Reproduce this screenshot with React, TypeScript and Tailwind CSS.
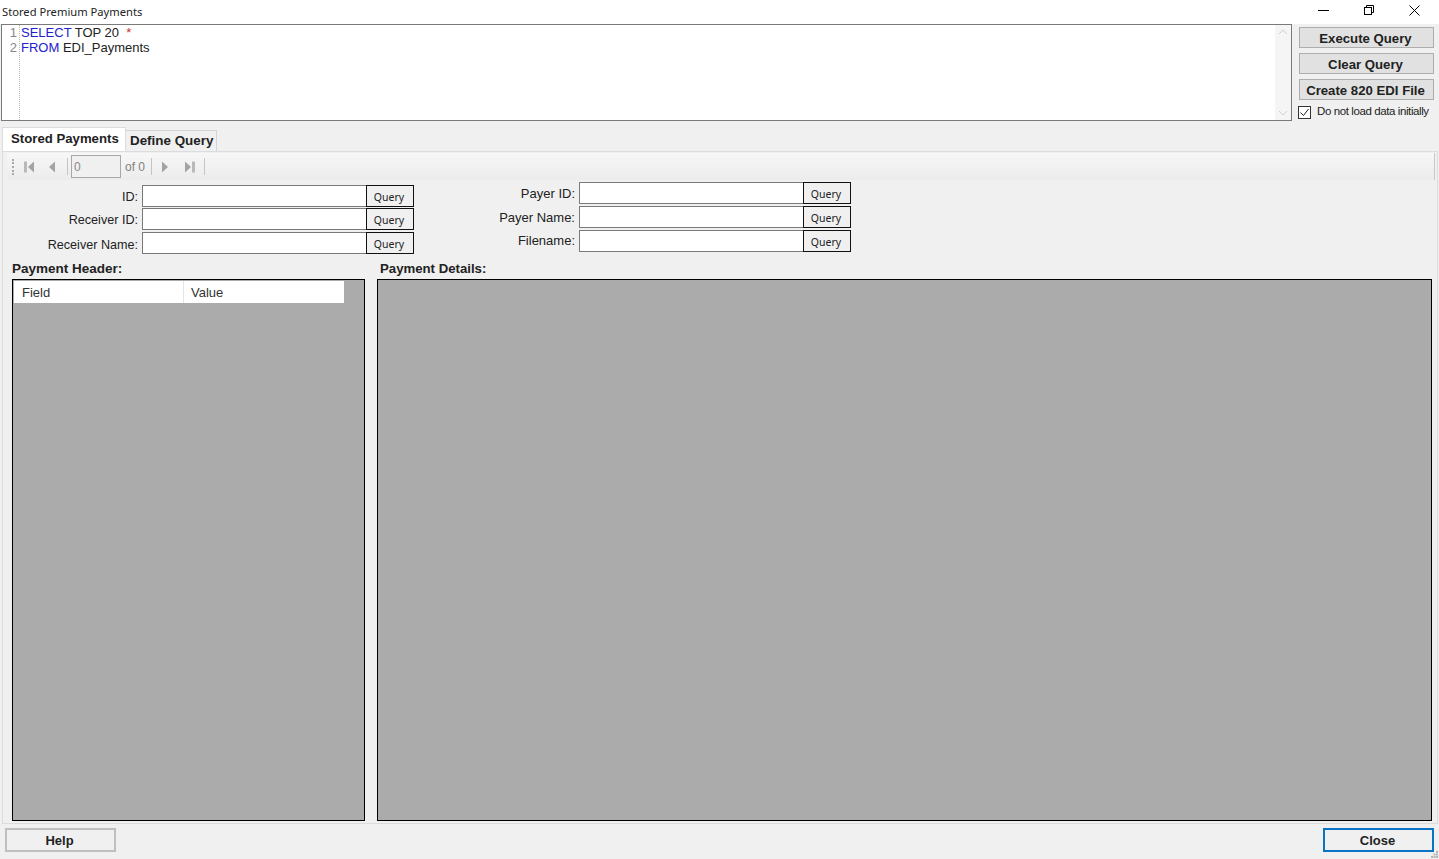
const ui = "font-['Liberation_Sans',Arial,sans-serif]";

function QueryField({ label, labelWidth, labelSize }: { label: string; labelWidth: string; labelSize: string }) {
  return (
    <div className="flex items-center h-[22px]">
      <span className={`${labelWidth} ${labelSize} shrink-0 text-right pr-[4px] text-[#222] leading-none whitespace-nowrap`}>{label}</span>
      <div className="w-[224px] h-[22px] bg-white border border-[#7a7a7a] border-r-0" />
      <button className="w-[48px] h-[22px] border border-[#111] bg-[#f0f0f0] text-[10.5px] text-[#222] font-['Noto_Sans',sans-serif] leading-none pt-[2px] pr-[2px]">
        Query
      </button>
    </div>
  );
}

function NavArrow({ dir, bar }: { dir: "left" | "right"; bar?: boolean }) {
  return (
    <svg width="14" height="14" viewBox="0 0 14 14" className="shrink-0">
      {dir === "left" ? (
        <>
          {bar && <rect x="1" y="1.5" width="3" height="11" fill="#b9b9b9" />}
          <path d="M11 1.5 L5 7 L11 12.5 Z" fill="#a3a3a3" />
        </>
      ) : (
        <>
          <path d="M3 1.5 L9 7 L3 12.5 Z" fill="#a3a3a3" />
          {bar && <rect x="10" y="1.5" width="3" height="11" fill="#b9b9b9" />}
        </>
      )}
    </svg>
  );
}

function Sep() {
  return <div className="w-px h-[17px] bg-[#c4c4c4] shrink-0" />;
}

function SideButton({ children }: { children: string }) {
  return (
    <button className="w-[135px] h-[21px] bg-[#e1e1e1] border border-[#adadad] text-[13.2px] font-bold text-[#222] leading-none whitespace-nowrap pt-[2px] pr-[2px]">
      {children}
    </button>
  );
}

export default function App() {
  return (
    <div className={`${ui} relative w-[1439px] h-[859px] bg-[#f0f0f0] flex flex-col overflow-hidden text-[#222]`}>
      {/* title bar */}
      <div className="h-[24px] shrink-0 bg-white flex items-center justify-between">
        <span className="pl-[2px] text-[11.2px] text-[#222] font-['Noto_Sans',sans-serif] leading-none">Stored Premium Payments</span>
        <div className="flex items-center pr-[19px] pb-[4px]">
          <svg width="11" height="11" viewBox="0 0 11 11" stroke="black" strokeWidth="1">
            <path d="M0 5.5 H11" />
          </svg>
          <svg width="12" height="12" viewBox="0 0 12 12" fill="none" stroke="black" strokeWidth="1" className="ml-[34px]">
            <rect x="1.5" y="3.5" width="7" height="7" />
            <path d="M3.5 3.5 V1.5 H10.5 V8.5 H8.5" />
          </svg>
          <svg width="11" height="11" viewBox="0 0 11 11" fill="none" stroke="black" strokeWidth="1" className="ml-[34px]">
            <path d="M0.5 0.5 L10.5 10.5 M10.5 0.5 L0.5 10.5" />
          </svg>
        </div>
      </div>

      {/* query editor + buttons */}
      <div className="h-[104px] shrink-0 flex items-start pl-[1px]">
        <div className="w-[1291px] h-[97px] bg-white border border-[#7a7a7a] flex">
          <div className="w-[18px] shrink-0 border-r border-dotted border-[#bbb] text-right pr-[2px] text-[13px] leading-[15px] text-[#888]">
            <div>1</div>
            <div>2</div>
          </div>
          <div className="flex-1 pl-[1px] text-[13px] leading-[15px] text-[#222] whitespace-pre">
            <div>
              <span className="text-[#2222cc]">SELECT</span> TOP 20 <span className="text-[#cc3333]"> *</span>
            </div>
            <div>
              <span className="text-[#2222cc]">FROM</span> EDI_Payments
            </div>
          </div>
          <div className="w-[16px] shrink-0 bg-[#f5f5f5] flex flex-col justify-between items-center py-[4px] text-[#cfcfcf]">
            <svg width="10" height="6" viewBox="0 0 10 6" fill="none" stroke="currentColor"><path d="M1 5 L5 1 L9 5" /></svg>
            <svg width="10" height="6" viewBox="0 0 10 6" fill="none" stroke="currentColor"><path d="M1 1 L5 5 L9 1" /></svg>
          </div>
        </div>
        <div className="ml-[7px] pt-[3px] flex flex-col gap-[5px]">
          <SideButton>Execute Query</SideButton>
          <SideButton>Clear Query</SideButton>
          <SideButton>Create 820 EDI File</SideButton>
          <label className="flex items-center gap-[6px] -ml-[1px] h-[14px]">
            <span className="w-[13px] h-[13px] bg-white border border-[#333] flex items-center justify-center">
              <svg width="11" height="11" viewBox="0 0 11 11" fill="none" stroke="#222" strokeWidth="1">
                <path d="M1.5 5.5 L4.5 8.5 L9.5 2" />
              </svg>
            </span>
            <span className="text-[11.5px] tracking-[-0.4px] text-[#222] leading-none whitespace-nowrap">Do not load data initially</span>
          </label>
        </div>
      </div>

      {/* tabs */}
      <div className="h-[23px] shrink-0 flex items-end pl-[2px] relative z-10">
        <div className="w-[124px] h-[24px] bg-white border border-b-0 border-[#dcdcdc] text-[13.2px] font-bold pl-[8px] pb-[1px] flex items-center leading-none whitespace-nowrap">
          Stored Payments
        </div>
        <div className="w-[91px] h-[21px] bg-[#f0f0f0] border border-b-0 border-l-0 border-[#d4d4d4] text-[13.4px] font-bold pl-[4px] flex items-center leading-none whitespace-nowrap">
          Define Query
        </div>
      </div>

      {/* tab panel */}
      <div className="h-[673px] shrink-0 ml-[2px] mr-[1px] border border-[#dcdcdc] bg-[#f0f0f0] flex flex-col pl-[4px] pr-[2px]">
        <div className="h-[27px] mt-[1px] shrink-0 bg-gradient-to-b from-[#f7f7f7] to-[#ececec] border-r border-[#c8c8c8] flex items-center pl-[5px] text-[12px] text-[#777]">
          <div className="w-[2px] h-[16px] shrink-0 border-l-2 border-dotted border-[#aaa]" />
          <div className="ml-[9px]"><NavArrow dir="left" bar /></div>
          <div className="ml-[7px]"><NavArrow dir="left" /></div>
          <div className="ml-[9px]"><Sep /></div>
          <div className="ml-[3px] w-[50px] h-[23px] bg-[#f0f0f0] border border-[#a8a8a8] flex items-center pl-[2px] text-[12px] text-[#888]">0</div>
          <span className="ml-[4px] text-[12px] text-[#808080]">of 0</span>
          <div className="ml-[6px]"><Sep /></div>
          <div className="ml-[7px]"><NavArrow dir="right" /></div>
          <div className="ml-[9px]"><NavArrow dir="right" bar /></div>
          <div className="ml-[8px]"><Sep /></div>
        </div>

        {/* search fields */}
        <div className="h-[81px] shrink-0 flex items-start">
          <div className="pt-[5px] flex flex-col gap-[1px]">
            <QueryField label="ID:" labelWidth="w-[135px]" labelSize="text-[12.6px] pt-[2px]" />
            <QueryField label="Receiver ID:" labelWidth="w-[135px]" labelSize="text-[12.6px] pt-[2px]" />
            <div className="mt-[1px]">
              <QueryField label="Receiver Name:" labelWidth="w-[135px]" labelSize="text-[12.6px] pt-[4px]" />
            </div>
          </div>
          <div className="ml-[23px] pt-[2px] flex flex-col gap-[2px]">
            <QueryField label="Payer ID:" labelWidth="w-[142px]" labelSize="text-[13px]" />
            <QueryField label="Payer Name:" labelWidth="w-[142px]" labelSize="text-[13px]" />
            <QueryField label="Filename:" labelWidth="w-[142px]" labelSize="text-[13px] pb-[2px]" />
          </div>
        </div>

        {/* grids */}
        <div className="flex-1 min-h-0 flex pl-[5px] pb-[2px] pr-[3px]">
          <div className="w-[353px] shrink-0 flex flex-col">
            <div className="h-[18px] shrink-0 pt-[1px] text-[13.5px] font-bold leading-none text-[#222]">Payment Header:</div>
            <div className="flex-1 bg-[#ababab] border border-black pt-[1px] pl-[1px]">
              <div className="w-[330px] h-[22px] bg-white flex items-center text-[13px] text-[#333] leading-none">
                <div className="w-[170px] h-full border-r border-[#e5e5e5] pl-[8px] flex items-center">Field</div>
                <div className="pl-[7px]">Value</div>
              </div>
            </div>
          </div>
          <div className="ml-[12px] flex-1 flex flex-col">
            <div className="h-[18px] shrink-0 pt-[1px] pl-[3px] text-[13.2px] font-bold leading-none text-[#222]">Payment Details:</div>
            <div className="flex-1 bg-[#ababab] border border-black" />
          </div>
        </div>
      </div>

      {/* footer */}
      <div className="flex-1 flex items-start justify-between pl-[5px] pr-[5px] pt-[4px]">
        <button className="w-[111px] h-[24px] bg-[#f0f0f0] border-2 border-[#bfbfbf] text-[13px] font-bold leading-none text-[#222] pr-[2px]">Help</button>
        <button className="w-[111px] h-[24px] bg-[#f0f0f0] border-2 border-[#0a74c4] text-[13px] font-bold leading-none text-[#222] pr-[2px]">Close</button>
      </div>

      {/* size grip */}
      <svg width="7" height="7" viewBox="0 0 7 7" fill="#b5b5b5" className="absolute right-[1px] bottom-[1px]">
        <rect x="5" y="0" width="2" height="2" />
        <rect x="2.5" y="2.5" width="2" height="2" />
        <rect x="5" y="2.5" width="2" height="2" />
        <rect x="0" y="5" width="2" height="2" />
        <rect x="2.5" y="5" width="2" height="2" />
        <rect x="5" y="5" width="2" height="2" />
      </svg>
    </div>
  );
}
